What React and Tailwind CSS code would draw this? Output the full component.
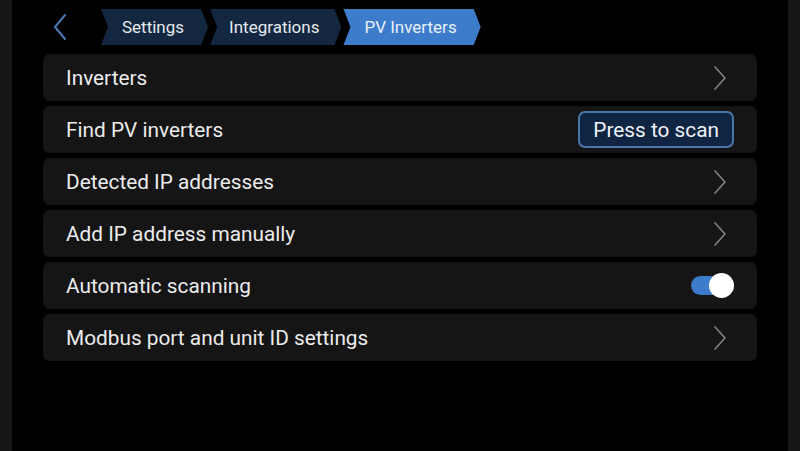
import React from "react";

const rows = [
  { label: "Inverters", kind: "nav" },
  { label: "Find PV inverters", kind: "button" },
  { label: "Detected IP addresses", kind: "nav" },
  { label: "Add IP address manually", kind: "nav" },
  { label: "Automatic scanning", kind: "switch" },
  { label: "Modbus port and unit ID settings", kind: "nav" },
];

function Chevron({ className = "" }) {
  return (
    <svg width="14" height="26" viewBox="0 0 14 26" fill="none" className={className}>
      <path d="M2 2 L12 13 L2 24" stroke="currentColor" strokeWidth="1.8" strokeLinecap="round" strokeLinejoin="round" />
    </svg>
  );
}

function Crumb({ children, className }) {
  return (
    <div
      className={`h-[36px] flex items-center text-[17px] pt-[1px] ${className} [clip-path:polygon(0_0,calc(100%-7px)_0,100%_50%,calc(100%-7px)_100%,0_100%,7px_50%)]`}
    >
      {children}
    </div>
  );
}

function Row({ row }) {
  return (
    <div className="h-[47px] rounded-[7px] bg-[#151515] flex items-center pl-[23px] pr-[23px]">
      <span className="flex-1 text-[20.8px] pt-[3px] text-[#ececec]">{row.label}</span>
      {row.kind === "nav" && <Chevron className="text-[#7d7d7d] mr-[7px]" />}
      {row.kind === "button" && (
        <button className="h-[37px] px-[13px] pt-[2px] rounded-[7px] border-2 border-[#4a78ad] bg-[#0f2541] text-[20.8px] text-[#eef2f7]">
          Press to scan
        </button>
      )}
      {row.kind === "switch" && (
        <div className="w-[42px] h-[19px] rounded-full bg-[#3d7cca] relative mr-[1px]">
          <div className="absolute right-[-1px] top-[-3px] w-[25px] h-[25px] rounded-full bg-white" />
        </div>
      )}
    </div>
  );
}

export default function App() {
  return (
    <div className="w-[800px] h-[451px] bg-[#161616] flex overflow-hidden" style={{ fontFamily: "Roboto, 'Noto Sans', sans-serif" }}>
      <div className="w-[12px]" />
      <div className="w-[776px] bg-black flex flex-col">
        <div className="h-[54px] flex items-center">
          <div className="w-[89px] flex pl-[40px] items-center">
            <svg width="16" height="28" viewBox="0 0 16 28" fill="none">
              <path d="M13 2 L3 14 L13 26" stroke="#4a78b0" strokeWidth="2" strokeLinecap="round" strokeLinejoin="round" />
            </svg>
          </div>
          <div className="flex gap-[2px]">
            <Crumb className="bg-[#132840] text-[#e6e9ee] pl-[21px] pr-[24px]">Settings</Crumb>
            <Crumb className="bg-[#132840] text-[#e6e9ee] pl-[19px] pr-[22px]">Integrations</Crumb>
            <Crumb className="bg-[#3d7cca] text-[#e8f0fb] pl-[21px] pr-[24px]">PV Inverters</Crumb>
          </div>
        </div>
        <div className="flex flex-col gap-[5px] pl-[31px] pr-[31px]">
          {rows.map((r) => (
            <Row key={r.label} row={r} />
          ))}
        </div>
      </div>
      <div className="w-[12px]" />
    </div>
  );
}
